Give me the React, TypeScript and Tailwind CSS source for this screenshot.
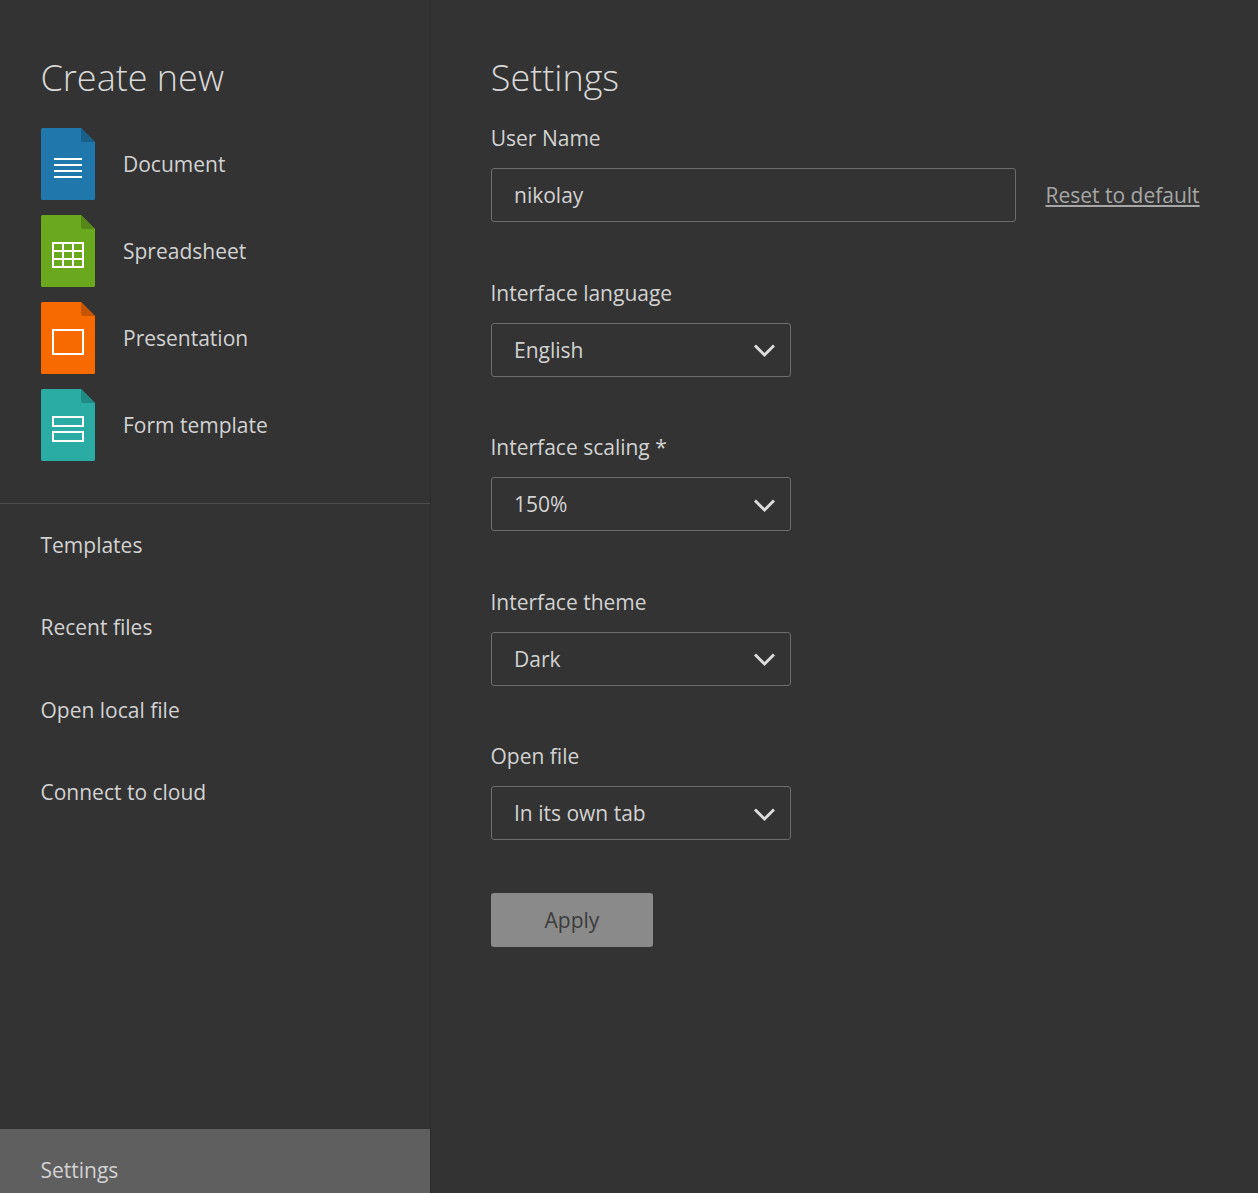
import React from 'react'

const NEW_ITEMS = [
  { label: 'Document', body: '#1f77ab', fold: '#185f89', glyph: 'doc' },
  { label: 'Spreadsheet', body: '#6aa81e', fold: '#558618', glyph: 'sheet' },
  { label: 'Presentation', body: '#f66a00', fold: '#c55500', glyph: 'slide' },
  { label: 'Form template', body: '#2aaca5', fold: '#228a84', glyph: 'form' },
]

const MENU_ITEMS = ['Templates', 'Recent files', 'Open local file', 'Connect to cloud']

const SELECTS = [
  { label: 'Interface language', value: 'English' },
  { label: 'Interface scaling *', value: '150%' },
  { label: 'Interface theme', value: 'Dark' },
  { label: 'Open file', value: 'In its own tab' },
]

const FileIcon = ({ body, fold, glyph }: { body: string; fold: string; glyph: string }) => (
  <svg width="54" height="72" viewBox="0 0 54 72" className="shrink-0">
    <path d="M1.5 0H40L54 14V70.5A1.5 1.5 0 0 1 52.5 72H1.5A1.5 1.5 0 0 1 0 70.5V1.5A1.5 1.5 0 0 1 1.5 0Z" fill={body} />
    <path d="M40 0L54 14H42A2 2 0 0 1 40 12Z" fill={fold} />
    {glyph === 'doc' && (
      <g fill="#fff">
        <rect x="13" y="30" width="28" height="2" />
        <rect x="13" y="36" width="28" height="2" />
        <rect x="13" y="42" width="28" height="2" />
        <rect x="13" y="48" width="28" height="2" />
      </g>
    )}
    {glyph === 'sheet' && (
      <g fill="none" stroke="#fff" strokeWidth="2">
        <rect x="12" y="28" width="30" height="24" />
        <path d="M22 28V52M32 28V52M12 36H42M12 44H42" />
      </g>
    )}
    {glyph === 'slide' && <rect x="12" y="28" width="30" height="24" fill="none" stroke="#fff" strokeWidth="2" />}
    {glyph === 'form' && (
      <g fill="none" stroke="#fff" strokeWidth="2">
        <rect x="12" y="28" width="30" height="9" />
        <rect x="12" y="43" width="30" height="9" />
      </g>
    )}
  </svg>
)

const Chevron = () => (
  <svg width="22" height="14" viewBox="0 0 22 14" className="mt-[3px] shrink-0">
    <path d="M2 1.5L11.5 11L21 1.5" fill="none" stroke="#dcdcdc" strokeWidth="3" />
  </svg>
)

export default function App() {
  return (
    <div className="flex h-[1193px] w-[1258px] overflow-hidden bg-[#333333] font-['Open_Sans',sans-serif] text-[21px] text-[#d2d2d2]">
      <aside className="flex w-[431px] shrink-0 flex-col border-r border-[#2b2b2b]">
        <h1 className="mt-[53px] h-[50px] pl-[40.5px] text-[36px] leading-[50px] font-light text-[#d9d9d9]">Create new</h1>
        <div className="mt-[25px] flex flex-col gap-[15px] pl-[41px]">
          {NEW_ITEMS.map((item) => (
            <div key={item.label} className="flex h-[72px] items-center gap-[28px]">
              <FileIcon body={item.body} fold={item.fold} glyph={item.glyph} />
              <span className="pt-[2px]">{item.label}</span>
            </div>
          ))}
        </div>
        <div className="mt-[42px] h-px bg-[#4d4d4d]" />
        <nav className="mt-[25.75px] flex flex-col gap-[52.5px] pl-[40.5px]">
          {MENU_ITEMS.map((item) => (
            <div key={item} className="h-[30px] leading-[30px]">{item}</div>
          ))}
        </nav>
        <div className="mt-auto flex h-[64px] items-end bg-[#5f5f5f] pb-[8px] pl-[40.5px]">
          <span className="leading-[30px]">Settings</span>
        </div>
      </aside>

      <main className="flex-1 pl-[60px]">
        <h1 className="mt-[53px] -ml-[0.25px] h-[50px] text-[36px] leading-[50px] font-light text-[#d9d9d9]">Settings</h1>
        <label className="mt-[20px] -ml-[0.25px] block h-[30px] leading-[30px]">User Name</label>
        <div className="mt-[15px] flex items-center gap-[29.5px]">
          <div className="flex h-[54px] w-[525px] items-center rounded-[3px] border border-[#6e6e6e] pt-[2px] pl-[22px]">nikolay</div>
          <a className="pt-[2px] text-[#a6a6a6] underline">Reset to default</a>
        </div>
        <div className="mt-[55.75px] flex flex-col gap-[55.5px]">
          {SELECTS.map((s) => (
            <div key={s.label}>
              <label className="-ml-[0.5px] block h-[30px] leading-[30px]">{s.label}</label>
              <div className="mt-[15px] flex h-[54px] w-[300px] items-center justify-between rounded-[3px] border border-[#6e6e6e] pr-[15px] pl-[22px]">
                <span className="leading-[30px]">{s.value}</span>
                <Chevron />
              </div>
            </div>
          ))}
        </div>
        <button className="mt-[52.75px] block h-[54px] w-[162px] rounded-[3px] bg-[#8a8a8a] leading-[30px] text-[#3c3c3c]">Apply</button>
      </main>
    </div>
  )
}
